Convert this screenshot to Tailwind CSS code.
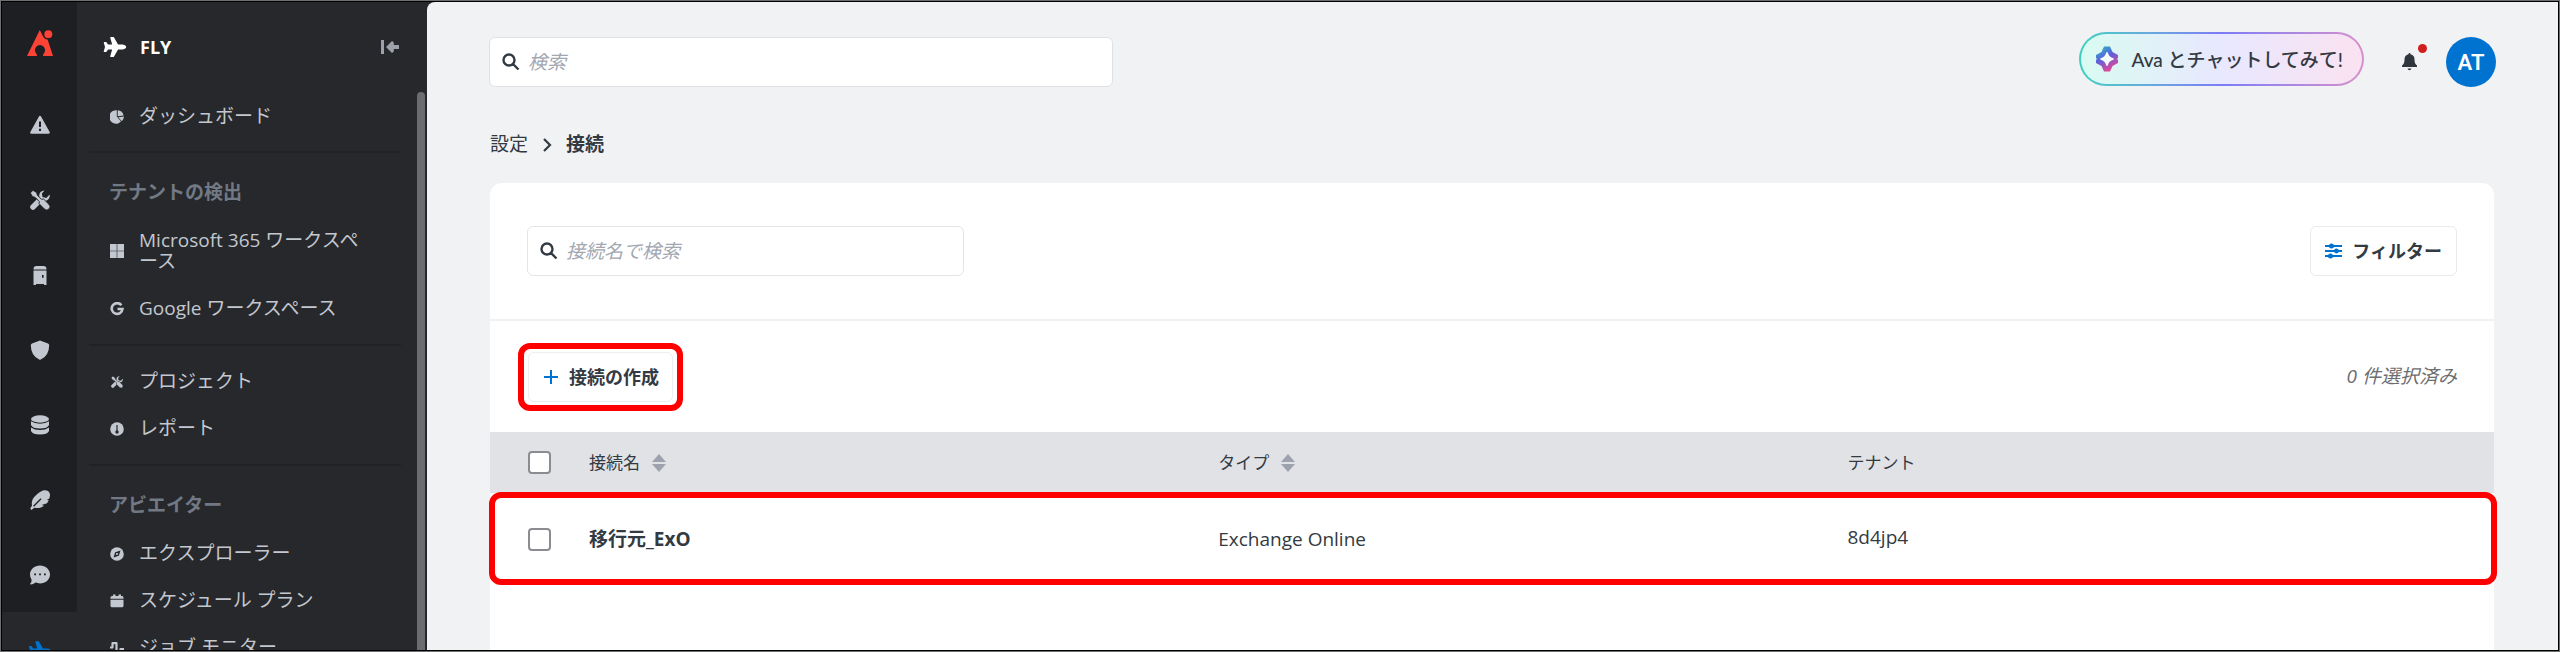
<!DOCTYPE html>
<html lang="ja">
<head>
  <meta charset="UTF-8">
  <meta name="viewport" content="width=device-width, initial-scale=1.0">
  <title>FLY - 接続</title>
  <script src="https://cdn.jsdelivr.net/npm/@tailwindcss/browser@4"></script>
</head>
<body class="font-['Open_Sans','Noto_Sans_CJK_JP',sans-serif] text-[19px] leading-[21px] text-[#333a42]">
  <!-- Shared icons -->
  <svg class="hidden" aria-hidden="true">
    <symbol id="plane" viewBox="0 0 576 512"><path fill="currentColor" d="M480 192H365.71L260.61 8.06A16.014 16.014 0 0 0 246.71 0h-65.5c-10.63 0-18.3 10.17-15.38 20.39L214.86 192H112l-43.2-57.6c-3.02-4.03-7.77-6.4-12.8-6.4H16.01C5.6 128-2.04 137.78.49 147.88L32 256 .49 364.12C-2.04 374.22 5.6 384 16.01 384H56c5.04 0 9.78-2.37 12.8-6.4L112 320h102.86l-49.03 171.6c-2.92 10.22 4.75 20.4 15.38 20.4h65.5c5.74 0 11.04-3.08 13.89-8.06L365.71 320H480c35.35 0 96-28.65 96-64s-60.65-64-96-64z"/></symbol>
    <symbol id="tools" viewBox="0 0 20 20">
      <path d="M3 17 10.500 9.500" stroke="currentColor" stroke-width="5.500" stroke-linecap="round"/>
      <path d="M19.600 4.500A5.300 5.300 0 1 1 14.500.4l-2.600 3.100.6 3.600 3.800.8z" fill="currentColor"/>
      <path d="M.3 3 3 .3l3.600 2.200.8 2.700 4.200 4.200 2-.4 5.400 5.400a3.200 3.200 0 0 1-4.600 4.600L9 13.600l.4-2-4.200-4.200-2.700-.8z" fill="currentColor" stroke="var(--gap,#1e1f22)" stroke-width=".9"/>
    </symbol>
    <symbol id="search" viewBox="0 0 18 18"><path d="M7 1.500a5.500 5.500 0 1 1 0 11 5.500 5.500 0 0 1 0-11ZM11 11l5.500 5.500" fill="none" stroke="currentColor" stroke-width="2.400"/></symbol>
    <symbol id="sort" viewBox="0 0 14 18"><path d="m7 0 7 8H0zM0 10h14l-7 8z" fill="currentColor"/></symbol>
  </svg>

  <div class="h-screen border border-[#6d706e] bg-[#27282b]">
    <div class="flex h-full overflow-hidden border border-black">
      <!-- Product rail -->
      <nav class="flex w-[75px] shrink-0 flex-col items-center text-[#c3c7cf]">
        <div class="flex w-full flex-col items-center gap-[55px] bg-[#1e1f22] pt-7 pb-[27px]">
          <a href="#" aria-label="ホーム" class="-mb-2 text-[#fd4336]">
            <svg class="h-[26px] w-[26px]" viewBox="0 0 25 25"><path fill="currentColor" d="M12.300 0 15.500 6.200a5 5 0 0 0 4.300 2.900L25 25h-9.500v-1.800a4.900 4.900 0 1 0-6 0V25H0z"/><circle cx="20.500" cy="4" r="3.800" fill="currentColor"/></svg>
          </a>
          <a href="#" aria-label="アラート" class="pt-3"><svg class="h-5 w-5" viewBox="0 0 20 20"><path d="M10 2 18.600 17.500H1.400z" fill="currentColor" stroke="currentColor" stroke-width="2.400" stroke-linejoin="round"/><path d="M10 6.500v5.500M10 13.800v2.200" stroke="#1e1f22" stroke-width="2"/></svg></a>
          <a href="#" aria-label="ツール"><svg class="h-5 w-5"><use href="#tools"/></svg></a>
          <a href="#" aria-label="ストレージ"><svg class="h-5 w-5" viewBox="0 0 20 20"><path fill="currentColor" d="M3.500 4a3 3 0 0 1 3-3h7a3 3 0 0 1 3 3v.5h-13zM3.500 5.500h13V20H14v-1H6v1H3.500zM12 10v2.800h1.600V10z" fill-rule="evenodd"/></svg></a>
          <a href="#" aria-label="保護"><svg class="h-5 w-5" viewBox="0 0 20 20"><path fill="currentColor" d="M10 .5 18 3.600q1.200.5 1.200 1.700Q19 16 10.800 19.600q-.8.400-1.600 0Q1 16 .8 5.300.8 4.100 2 3.600z"/></svg></a>
          <a href="#" aria-label="データ"><svg class="h-5 w-5" viewBox="0 0 20 20" fill="currentColor"><ellipse cx="10" cy="4" rx="9" ry="3.700"/><path d="M1 6.300q3.500 2.400 9 2.400t9-2.400V10q-1.500 3.500-9 3.500T1 10zM1 12.500Q4.500 15 10 15t9-2.500V16q-1.500 3.500-9 3.500T1 16z"/></svg></a>
          <a href="#" aria-label="レコード"><svg class="h-5 w-5" viewBox="0 0 20 20"><path fill="currentColor" d="M20 5.600C20.300 2 18 .1 14.500.2 11 .6 4.500 5.500 2.600 9.500c-1 2.200-1 4.200-.6 6L.2 18.600l1.200 1.300 3-2.200c3 .8 7 .5 9.600-2l-2.500-.8 5-1.400c1.200-1 1.800-2 2.200-3.200l-2-.4 2.400-1.200c.5-1 .8-2 .9-3.100z"/><path d="m3.600 16.200 7.400-7.400" stroke="#1e1f22" stroke-width="1.300"/></svg></a>
          <a href="#" aria-label="チャット"><svg class="h-5 w-5" viewBox="0 0 20 20"><path fill="currentColor" d="M10 .5c5.500 0 10 3.900 10 8.900s-4.500 9-10 9q-2.300 0-4.300-.8Q3 19.500.6 19.500q-.8-.2-.3-.9 1.500-1.600 1.200-4Q0 12.400 0 9.400C0 4.400 4.500.5 10 .5z"/><path fill="#1e1f22" d="M4.200 8.500H6v1.800H4.200zM9.100 8.500h1.800v1.800H9.100zM14 8.500h1.800v1.800H14z"/></svg></a>
        </div>
        <a href="#" aria-label="FLY" class="shrink-0 pt-[26px] text-[#0072d0]"><svg class="h-[26px] w-[22px]"><use href="#plane"/></svg></a>
      </nav>

      <!-- Side menu -->
      <aside class="flex w-[350px] shrink-0 flex-col text-[#c3c7cf]">
        <div class="flex h-[90px] shrink-0 items-center pr-7 pl-[26px]">
          <svg class="h-5 w-6 text-white"><use href="#plane"/></svg>
          <span class="ml-[13px] text-lg font-bold text-white">FLY</span>
          <button type="button" aria-label="メニューを閉じる" class="ml-auto"><svg class="h-[14px] w-[18px]" viewBox="0 0 18 14" fill="#9da1aa"><path d="M0 0h3v14H0zM5 7l6-6 1.800 1.600V5H18v4h-5.200v2.400L11 13z"/></svg></button>
        </div>
        <div class="flex min-h-0 grow">
          <nav class="min-w-0 grow overflow-hidden pr-4 pl-3">
            <a href="#" class="flex items-center gap-[15px] px-[21px] pt-[14px] pb-3">
              <svg class="h-[14px] w-[14px] shrink-0" viewBox="0 0 14 14" fill="currentColor"><path d="M6.800.2v6.400l4.200 5A6.800 6.800 0 1 1 6.800.2z"/><path d="M7.700.2A6.500 6.500 0 0 1 13.600 5.400L7.700 6.300zM8.300 7.200l5.600-.8q.2 3-2.100 4.800z"/></svg>
              ダッシュボード
            </a>
            <hr class="my-3 border-t-2 border-[#212225]">
            <h2 class="flex h-[52px] items-center px-5 pt-[2px] font-semibold text-[#717985]">テナントの検出</h2>
            <a href="#" class="flex items-center gap-[15px] py-[13px] pr-10 pl-[21px] [line-break:anywhere]">
              <svg class="h-[14px] w-[14px] shrink-0" viewBox="0 0 14 14" fill="currentColor"><path d="M0 0h6.700v6.700H0zM7.300 0H14v6.700H7.300zM0 7.300h6.700V14H0zM7.300 7.300H14V14H7.300z"/></svg>
              Microsoft 365 ワークスペース
            </a>
            <a href="#" class="flex items-center gap-[15px] px-[21px] py-[13px]">
              <svg class="h-[14px] w-[14px] shrink-0" viewBox="0 0 14 14"><path d="M11.400 3.200A5.400 5.400 0 1 0 12.500 7H7.500" fill="none" stroke="currentColor" stroke-width="2.600"/></svg>
              Google ワークスペース
            </a>
            <hr class="my-3 border-t-2 border-[#212225]">
            <a href="#" class="flex items-center gap-[15px] px-[21px] py-[13px]">
              <svg class="h-[14px] w-[14px] shrink-0 p-px [--gap:#27282b]"><use href="#tools"/></svg>
              プロジェクト
            </a>
            <a href="#" class="flex items-center gap-[15px] px-[21px] py-[13px]">
              <svg class="h-[14px] w-[14px] shrink-0" viewBox="0 0 14 14"><circle cx="7" cy="7" r="6.800" fill="currentColor"/><path d="M7 3v6" stroke="#27282b" stroke-width="1.200"/><circle cx="7" cy="10" r="1.700" fill="#27282b"/></svg>
              レポート
            </a>
            <hr class="my-3 border-t-2 border-[#212225]">
            <h2 class="flex h-[52px] items-center px-5 pt-[2px] font-semibold text-[#717985]">アビエイター</h2>
            <a href="#" class="flex items-center gap-[15px] px-[21px] py-[13px]">
              <svg class="h-[14px] w-[14px] shrink-0" viewBox="0 0 14 14"><circle cx="7" cy="7" r="6.800" fill="currentColor"/><path d="m10.500 3.500-1.700 5.300-5.300 1.700 1.700-5.300z" fill="#27282b"/><circle cx="7" cy="7" r="1.100" fill="currentColor"/></svg>
              エクスプローラー
            </a>
            <a href="#" class="flex items-center gap-[15px] px-[21px] py-[13px]">
              <svg class="h-[14px] w-[14px] shrink-0" viewBox="0 0 14 14" fill="currentColor"><path d="M2 2h1V.5h2.500V2h3V.5H11V2h1a1.500 1.500 0 0 1 1.500 1.500v1.200H.5V3.500A1.500 1.500 0 0 1 2 2zM.5 5.700h13v6A1.500 1.500 0 0 1 12 13.200H2a1.500 1.500 0 0 1-1.500-1.500z"/></svg>
              スケジュール プラン
            </a>
            <a href="#" class="flex items-center gap-[15px] px-[21px] py-[13px]">
              <svg class="h-[14px] w-[14px] shrink-0" viewBox="0 0 14 14"><path d="M0 6.500h2.500V2.200h4v9.600h4V8H14" fill="none" stroke="currentColor" stroke-width="2.200" stroke-linejoin="round"/></svg>
              ジョブ モニター
            </a>
          </nav>
          <div class="mr-[2px] w-2 shrink-0 rounded-t bg-[#6b6c70]"></div>
        </div>
      </aside>

      <main class="flex min-w-0 grow flex-col rounded-tl-lg bg-[#f1f2f4] pr-16 pl-[63px]">
        <!-- Top bar -->
        <header class="-mr-[2px] flex shrink-0 items-start pt-[30px]">
          <label class="-ml-px mt-[5px] flex h-[50px] w-[624px] items-center gap-2 rounded-md border border-[#dfe1e5] bg-white px-3">
            <svg class="h-[18px] w-[18px] shrink-0"><use href="#search"/></svg>
            <input type="search" placeholder="検索" aria-label="検索" class="min-w-0 grow outline-none placeholder:text-[#a3a7b1] placeholder:italic">
          </label>
          <button type="button" class="ml-auto h-[54px] rounded-full bg-linear-to-r from-[#3ccfc0] via-[#7d7bf5] to-[#d68fcb] p-[2px]">
            <span class="flex h-full items-center gap-3 rounded-full bg-linear-to-r from-[#d9fbf1] via-[#e8e8fe] to-[#fae2f1] pr-[19px] pl-[14px] font-['Lato','Noto_Sans_CJK_JP',sans-serif] font-medium">
              <svg class="h-[26px] w-6" viewBox="0 0 24 26"><defs><linearGradient id="ava" x1="0" y1="0" x2=".5" y2="1"><stop offset="0" stop-color="#24c4bf"/><stop offset=".5" stop-color="#5b62dc"/><stop offset="1" stop-color="#e0489b"/></linearGradient></defs><path fill="url(#ava)" d="M9 .5h6l2.500 5.500 5.500 3v3.200l-1.500.8 1.500.8V17l-5.500 3-2.500 5.500H9L6.500 20 1 17v-3.200l1.500-.8-1.500-.8V9l5.500-3z"/><path d="M12 6.500Q13 12 18.500 13 13 14 12 19.500 11 14 5.500 13 11 12 12 6.500z" fill="#f4fbfd" stroke="#f4fbfd" stroke-width="1.500"/></svg>
              Ava とチャットしてみて!
            </span>
          </button>
          <button type="button" aria-label="通知" class="relative mt-[21px] ml-[38px]">
            <svg class="h-[18px] w-[15px]" viewBox="0 0 15 18" fill="#2f363e"><path d="M7.500 0q1 0 1 1.200 4 .8 4 5.300 0 4.500 2.500 6v1.500H0v-1.500q2.500-1.500 2.500-6 0-4.500 4-5.300 0-1.200 1-1.200zM5.500 15.500h4q-.5 1.700-2 1.700t-2-1.700z"/></svg>
            <span class="absolute -top-[9px] left-[16px] h-[9px] w-[9px] rounded-full bg-[#d01e1e]"></span>
          </button>
          <button type="button" class="mt-[5px] ml-[29px] h-[50px] w-[50px] rounded-full bg-[#0072d0] font-['Roboto',sans-serif] text-[22px] font-semibold text-white">AT</button>
        </header>

        <!-- Breadcrumb -->
        <nav class="mt-[47px] flex shrink-0 items-center">
          <a href="#">設定</a>
          <svg class="mx-[14px] h-[14px] w-[10px]" viewBox="0 0 10 14"><path d="m2 1 6 6-6 6" fill="none" stroke="currentColor" stroke-width="2.200"/></svg>
          <span class="font-bold">接続</span>
        </nav>

        <section class="mt-7 grow rounded-t-xl bg-white">
          <div class="flex h-[138px] items-start justify-between border-b-2 border-[#f1f2f4] px-[37px] pt-[43px]">
            <label class="flex h-[50px] w-[437px] items-center gap-2 rounded-md border border-[#e3e5e8] px-3">
              <svg class="h-[18px] w-[18px] shrink-0"><use href="#search"/></svg>
              <input type="search" placeholder="接続名で検索" aria-label="接続名で検索" class="min-w-0 grow outline-none placeholder:text-[#a3a7b1] placeholder:italic">
            </label>
            <button type="button" class="flex h-[50px] items-center gap-[10px] rounded-md border border-[#e8eaec] px-[14px] text-lg font-bold">
              <svg class="h-4 w-[17px]" viewBox="0 0 17 16"><path d="M0 3h17M0 8h17M0 13h17" stroke="#0072d0" stroke-width="1.800"/><path d="M4 3a2.500 2.500 0 0 1 5 0 2.500 2.500 0 0 1-5 0M9 8a2.500 2.500 0 0 1 5 0 2.500 2.500 0 0 1-5 0M3 13a2.500 2.500 0 0 1 5 0 2.500 2.500 0 0 1-5 0" fill="#0072d0"/></svg>
              フィルター
            </button>
          </div>

          <div class="flex h-[111px] items-center justify-between pr-[37px] pl-7">
            <div class="rounded-xl border-6 border-[#fe0000] px-1 py-[3px]">
              <button type="button" class="flex h-[50px] items-center gap-[10px] rounded-md border border-[#eceef0] pr-[13px] pl-[14px] text-lg font-bold">
                <svg class="h-4 w-4" viewBox="0 0 16 16"><path d="M8 1v14M1 8h14" stroke="#0072d0" stroke-width="2"/></svg>
                接続の作成
              </button>
            </div>
            <p class="text-[#6d6e70] italic">0 件選択済み</p>
          </div>

          <div class="relative">
            <table class="w-full table-fixed text-left">
              <thead class="bg-[#e0e2e6] text-[17px]">
                <tr class="h-[61px]">
                  <th class="w-[99px] pl-[38px]"><input type="checkbox" aria-label="すべて選択" class="block h-[23px] w-[23px] appearance-none rounded border-2 border-[#8a8c91] bg-white"></th>
                  <th class="w-[31.4%] font-normal"><span class="flex items-center gap-3">接続名 <svg class="h-[18px] w-[14px] text-[#9da2ae]"><use href="#sort"/></svg></span></th>
                  <th class="w-[31.4%] font-normal"><span class="flex items-center gap-3">タイプ <svg class="h-[18px] w-[14px] text-[#9da2ae]"><use href="#sort"/></svg></span></th>
                  <th class="font-normal">テナント</th>
                </tr>
              </thead>
              <tbody>
                <tr class="h-[92px]">
                  <td class="pl-[38px]"><input type="checkbox" aria-label="移行元_ExO を選択" class="block h-[23px] w-[23px] appearance-none rounded border-2 border-[#8a8c91] bg-white"></td>
                  <td class="font-bold">移行元_ExO</td>
                  <td>Exchange Online</td>
                  <td class="pb-1">8d4jp4</td>
                </tr>
              </tbody>
            </table>
            <div class="pointer-events-none absolute -right-[3px] bottom-0 -left-px h-[93px] rounded-xl border-6 border-[#fe0000]"></div>
          </div>
        </section>
      </main>
    </div>
  </div>
</body>
</html>
